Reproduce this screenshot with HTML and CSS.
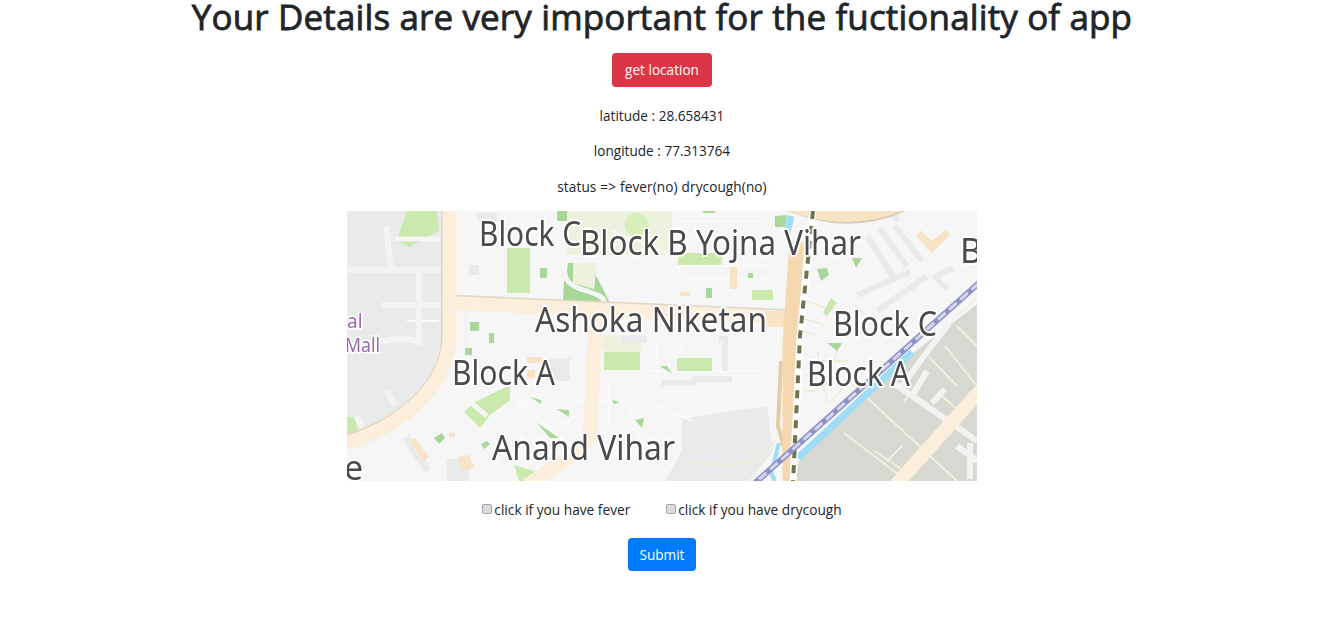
FILE: index.html
```html
<!DOCTYPE html>
<html lang="en">
<head>
<meta charset="utf-8">
<title>Your Details</title>
<link rel="stylesheet" href="styles.css">
</head>
<body>
<main class="page">
  <h1 class="title">Your Details are very important for the fuctionality of app</h1>
  <button class="btn btn-red" type="button">get location</button>
  <p class="line line-first">latitude : 28.658431</p>
  <p class="line">longitude : 77.313764</p>
  <p class="line line-last">status =&gt; fever(no) drycough(no)</p>
  <div class="map">
    <svg class="map-svg" viewBox="0 0 630 270" width="630" height="270" xmlns="http://www.w3.org/2000/svg">
      <rect class="bg" width="630" height="270"/>
      <!-- grey mall block -->
      <path class="bld" d="M0 0H95V130C92 170 50 212 0 226Z"/>
      <!-- pale park zones -->
      <path class="pale" d="M220 0H325V44H220Z"/>
      <path class="pale" d="M255 124H295V140H255Z"/>
      <path class="pale" d="M260 134H293V141H260Z"/>
      <!-- lower grey -->
      <path class="bld" d="M335 208L352 205L420 195L426 240L402 270H318L335 240Z"/>
      <path class="bld" d="M200 147H223V170H200Z"/>
      <path class="bld" d="M122 54H132V64H122Z"/>
      <path class="bld" d="M130 2H150V10H130Z"/>
      <path class="bld" d="M55 228L62 224L84 258L78 262Z"/>
      <path class="bld" d="M100 248H122V270H100Z"/>
      <path class="bld" d="M275 125H300V132H275Z"/>
      <path class="bld" d="M38 190L62 176L72 196L48 210Z"/>
      <!-- fine street texture -->
      <g class="fine">
        <path d="M110 140L230 240"/>
        <path d="M150 212L180 190"/>
        <path d="M170 218L185 245"/>
        <path d="M190 200L240 222"/>
        <path d="M120 205L160 240"/>
        <path d="M230 190L280 190"/>
        <path d="M262 170L262 215"/>
        <path d="M280 190L300 250"/>
        <path d="M300 160H420"/>
        <path d="M300 190L345 210"/>
        <path d="M330 55H425"/>
        <path d="M340 68H420"/>
        <path d="M330 100H420"/>
        <path d="M240 112L250 200"/>
        <path d="M310 130L310 170"/>
        <path d="M335 130V142"/>
        <path d="M265 20L340 50"/>
        <path d="M330 10H420"/>
        <path d="M60 110H92"/>
      </g>
      <g class="blds">
        <path d="M520 25L546 65"/>
        <path d="M533 18L560 55"/>
        <path d="M548 15L575 50"/>
        <path d="M510 84L563 61"/>
        <path d="M586 67L606 57"/>
        <path d="M590 68L600 78"/>
        <path d="M530 100L580 65"/>
        <path d="M540 0L552 10"/>
        <path d="M345 168H385"/>
        <path d="M372 128H378V160"/>
        <path d="M315 172H350"/>
      </g>
      <!-- cream streets beside railway -->
      <g class="cream">
        <path d="M460 90L480 98"/>
        <path d="M458 108L478 114"/>
        <path d="M456 120L470 124"/>
        <path d="M505 92L520 105"/>
        <path d="M462 150H500"/>
        <path d="M460 165L488 165"/>
        <path d="M458 180L470 180"/>
        <path d="M470 140L480 190"/>
        <path d="M490 140L476 180"/>
        <path d="M340 250C370 255 410 260 428 230"/>
      </g>
      <!-- industrial area -->
      <path class="ind" d="M632 92V270H449L452 250L566 142Z"/>
      <g class="ind-thin">
        <path d="M502 170L610 270"/>
        <path d="M497 222L560 270"/>
        <path d="M572 173L557 190"/>
        <path d="M540 250L555 235"/>
        <path d="M528 240L560 262"/>
        <path d="M598 135L630 175"/>
        <path d="M582 146L610 175"/>
        <path d="M610 105L632 85"/>
        <path d="M610 115L630 135"/>
        <path d="M502 170L482 192"/>
        <path d="M612 200L595 185"/>
      </g>
      <g class="wroad">
        <path d="M548 173L630 230"/>
        <path d="M555 175L583 137L600 115L590 103"/>
        <path d="M565 185L580 160"/>
        <path d="M610 235L630 250"/>
        <path d="M623 268V232"/>
        <path d="M585 192L598 178"/>
      </g>
      <path class="road-thick" d="M633 180L548 275"/>
      <!-- greens -->
      <g class="g1">
        <path d="M60 0H90L92 20L62 36L50 30L55 14Z"/>
        <path d="M160 37H183V82H160Z"/>
        <path d="M257 141H293V159H257Z"/>
        <path d="M330 147H365V160H330Z"/>
        <path d="M128 191L163 174V189L143 204L133 217L117 201Z"/>
        <path d="M331 42H376L374 54H331Z"/>
        <path d="M405 79H426V89H405Z"/>
        <path d="M0 206H7L12 224L3 227H0Z"/>
        <path d="M167 254L190 261L180 270H172Z"/>
        <path d="M476 102L484 87L490 92L480 105Z"/>
      </g>
      <g class="g2">
        <path d="M210 0H220V10H210Z"/>
        <path d="M193 57H200V67H193Z"/>
        <path d="M122 111H132V120H122Z"/>
        <path d="M142 122H147V132H142Z"/>
        <path d="M428 5L440 4L438 16L428 16Z"/>
        <path d="M356 0H368V2H356Z"/>
        <path d="M401 62H406V67H401Z"/>
        <path d="M359 77H365V87H359Z"/>
        <path d="M505 47H515L509 57Z"/>
        <path d="M470 58L480 57L482 64L474 70Z"/>
        <path d="M118 137H125V144H118Z"/>
        <path d="M183 186L194 189V193Z"/>
        <path d="M210 198L222 199V206Z"/>
        <path d="M190 212L212 227H203Z"/>
        <path d="M265 189L273 191L267 193Z"/>
        <path d="M288 209L297 207L295 217Z"/>
        <path d="M87 227L95 222L98 227L92 233Z"/>
        <path d="M134 233L140 230L143 233L137 238Z"/>
        <path d="M218 52L216 90L263 92L252 70L242 52Z"/>
        <path d="M480 132H495L490 140Z"/>
        <path d="M525 0H540V5L530 8Z"/>
        <path d="M313 155H320L325 163Z"/>
      </g>
      <circle class="g3" cx="290" cy="14" r="12"/>
      <path class="pale" d="M226 52H250L247 78L226 72Z"/>
      <path class="wline" d="M220 46C214 66 218 74 240 80C252 84 258 86 258 95"/>
      <path class="wline" d="M48 28H93"/>
      <path class="wline" d="M122 190L140 205"/>
      <!-- tan buildings -->
      <g class="tan">
        <path d="M383 56H390V78H383Z"/>
        <path d="M333 81H343V85H333Z"/>
        <path d="M180 146H195V152H180Z"/>
        <path d="M180 159H188V167H180Z"/>
        <path d="M62 229L68 227L82 246L77 250Z"/>
        <path d="M110 246L122 244L127 257L115 259Z"/>
        <path d="M573 19L585 30L600 18L603 24L585 42L569 25Z"/>
        <path d="M102 222H108V226H102Z"/>
      </g>
      <!-- minor white roads -->
      <g class="wroad">
        <path d="M0 59H95"/>
        <path d="M72 59V134"/>
        <path d="M35 94H95"/>
        <path d="M39 15L44 59"/>
        <path d="M0 135C30 132 50 125 70 130"/>
        <path d="M40 180L48 195"/>
        <path d="M10 205L18 225"/>
        <path d="M120 135V90"/>
      </g>
      <!-- roads with casing on one side -->
      <path class="case" d="M102 90.5L450 105.5"/>
      <path class="case" d="M101 0V128C99 175 54 215 -1 230"/>
      <path class="road-thick" d="M102 92L450 107"/>
      <path class="road-thick" d="M102.5 0V128C100 175 55 215 0 232"/>
      <path class="road-thick" d="M249 98L243 226C225 247 205 258 180 274"/>
      <path class="road-mid" d="M418 108H448"/>
      <!-- top arc -->
      <path class="case-arc" d="M440 -8C480 10 520 10 555 -6"/>
      <path class="road-arc" d="M440 -8C480 8 520 8 555 -8"/>
      <!-- water -->
      <path class="water" d="M444 5L440 22"/>
      <path class="water" d="M565 141L451 247"/>
      <path class="water-thin" d="M432 232L424 262L428 270"/>
      <!-- main road -->
      <path class="main-case" d="M434 150L431 215L438 240"/>
      <path class="main-case" d="M452 150L449 210"/>
      <path class="main" d="M450 30L443 130L443 272"/>
      <!-- railway -->
      <path class="rail-base" d="M466 -2L453 125L446 272"/>
      <path class="rail-dash" d="M466 0L453 125L446 272"/>
      <!-- diagonal railway -->
      <path class="drail-case" d="M632 72L408 272"/>
      <path class="drail" d="M632 72L408 272"/>
      <!-- labels -->
      <text class="poi" x="0" y="117">al</text>
      <text class="poi" x="-2" y="141" textLength="35" lengthAdjust="spacingAndGlyphs">Mall</text>
      <text class="label" x="132" y="35" textLength="102" lengthAdjust="spacingAndGlyphs">Block C</text>
      <text class="label" x="233" y="44" textLength="281" lengthAdjust="spacingAndGlyphs">Block B Yojna Vihar</text>
      <text class="label" x="613" y="52">B</text>
      <text class="label" x="188" y="121" textLength="232" lengthAdjust="spacingAndGlyphs">Ashoka Niketan</text>
      <text class="label" x="486" y="125" textLength="104" lengthAdjust="spacingAndGlyphs">Block C</text>
      <text class="label" x="105" y="174" textLength="103" lengthAdjust="spacingAndGlyphs">Block A</text>
      <text class="label" x="460" y="175" textLength="103" lengthAdjust="spacingAndGlyphs">Block A</text>
      <text class="label" x="145" y="249" textLength="183" lengthAdjust="spacingAndGlyphs">Anand Vihar</text>
      <text class="label" x="-3" y="269">e</text>
    </svg>
  </div>
  <div class="checks">
    <label class="check"><input class="box" type="checkbox">click if you have fever</label>
    <label class="check"><input class="box" type="checkbox">click if you have drycough</label>
  </div>
  <button class="btn btn-blue" type="submit">Submit</button>
</main>
</body>
</html>
```

FILE: styles.css
```css
* { box-sizing: border-box; }
html, body { margin: 0; padding: 0; background: #fff; }
body {
  font-family: "Open Sans", "Noto Sans", "Liberation Sans", sans-serif;
  color: #212529;
  font-size: 13.6px;
}
.page {
  display: flex;
  flex-direction: column;
  align-items: center;
  height: 624px;
  padding-right: 6px;
  overflow: hidden;
}
.title {
  margin: 0 0 20px;
  height: 33px;
  line-height: 33px;
  font-size: 35px;
  font-weight: 500;
  letter-spacing: 0.13px;
  -webkit-text-stroke: 0.8px #212529;
  white-space: nowrap;
}
.btn {
  display: block;
  border: 0;
  border-radius: 4px;
  color: #fff;
  font: inherit;
  font-size: 13.6px;
  height: 34px;
  padding: 0;
}
.btn-red { background: #dc3545; width: 100px; padding-bottom: 2px; }
.btn-blue { background: #007bff; width: 68px; height: 33px; padding-top: 1px; }
.line { margin: 0 0 17px; height: 18.5px; line-height: 18.5px; }
.line-first { margin-top: 20px; margin-bottom: 16.5px; }
.line-last { margin-bottom: 14px; margin-top: 0.5px; letter-spacing: 0.1px; word-spacing: 0.3px; }
.map { width: 630px; height: 270px; overflow: hidden; }
.map-svg { display: block; filter: blur(0.35px); }
.checks { display: flex; gap: 36px; margin: 19px 0 19px; height: 19px; line-height: 19px; font-size: 13.7px; }
.check { display: flex; align-items: center; }
.box {
  appearance: none;
  width: 10px;
  height: 10px;
  margin: -1px 2px 0 0;
  background: #dcdcdc;
  border: 1px solid #a0a0a0;
  border-radius: 2px;
}
.bg { fill: #f6f6f7; }
.bld { fill: #e9ebeb; }
.blds path { fill: none; stroke: #e9ebeb; stroke-width: 6; }
.fine path { fill: none; stroke: #fafafa; stroke-width: 2; }
.cream path { fill: none; stroke: #ecebd5; stroke-width: 1.5; }
.pale { fill: #edf2de; }
.ind { fill: #d7d8d2; }
.g1 path { fill: #cbe8ad; }
.g2 path { fill: #a9d79a; }
.g3 { fill: #d8eebb; }
.tan path { fill: #f7e4c6; }
.ind-thin path { fill: none; stroke: #f1f0df; stroke-width: 2; }
.wroad path { fill: none; stroke: #f3f3f3; stroke-width: 6; }
.wline { fill: none; stroke: #f6f6f7; stroke-width: 5; }
.case { fill: none; stroke: #e0d6c4; stroke-width: 14; }
.road-thick { fill: none; stroke: #fbeeda; stroke-width: 14; }
.road-mid { fill: none; stroke: #f8e3c4; stroke-width: 16; }
.case-arc { fill: none; stroke: #d8ccb8; stroke-width: 14; }
.road-arc { fill: none; stroke: #f8e3c4; stroke-width: 14; }
.main-case { fill: none; stroke: #e7cba6; stroke-width: 4; }
.main { fill: none; stroke: #f6d8b0; stroke-width: 15; }
.rail-base { fill: none; stroke: #fff; stroke-width: 7; }
.rail-dash { fill: none; stroke: #6f734f; stroke-width: 4; stroke-dasharray: 8 7; }
.water { fill: none; stroke: #9fdcf6; stroke-width: 7; }
.water-thin { fill: none; stroke: #9fdcf6; stroke-width: 4; }
.drail-case { fill: none; stroke: #8f92c4; stroke-width: 6; }
.drail { fill: none; stroke: #d3d6ee; stroke-width: 3; stroke-dasharray: 10 5; }
.label {
  font-family: "Noto Sans", "Open Sans", sans-serif;
  font-size: 34px;
  fill: #4a4a4c;
  stroke: #fff;
  stroke-width: 4px;
  stroke-opacity: 0.9;
  paint-order: stroke;
  stroke-linejoin: round;
}
.poi {
  font-family: "Noto Sans", "Open Sans", sans-serif;
  font-size: 19px;
  fill: #9a68a8;
  stroke: #fff;
  stroke-width: 3px;
  paint-order: stroke;
}
```
